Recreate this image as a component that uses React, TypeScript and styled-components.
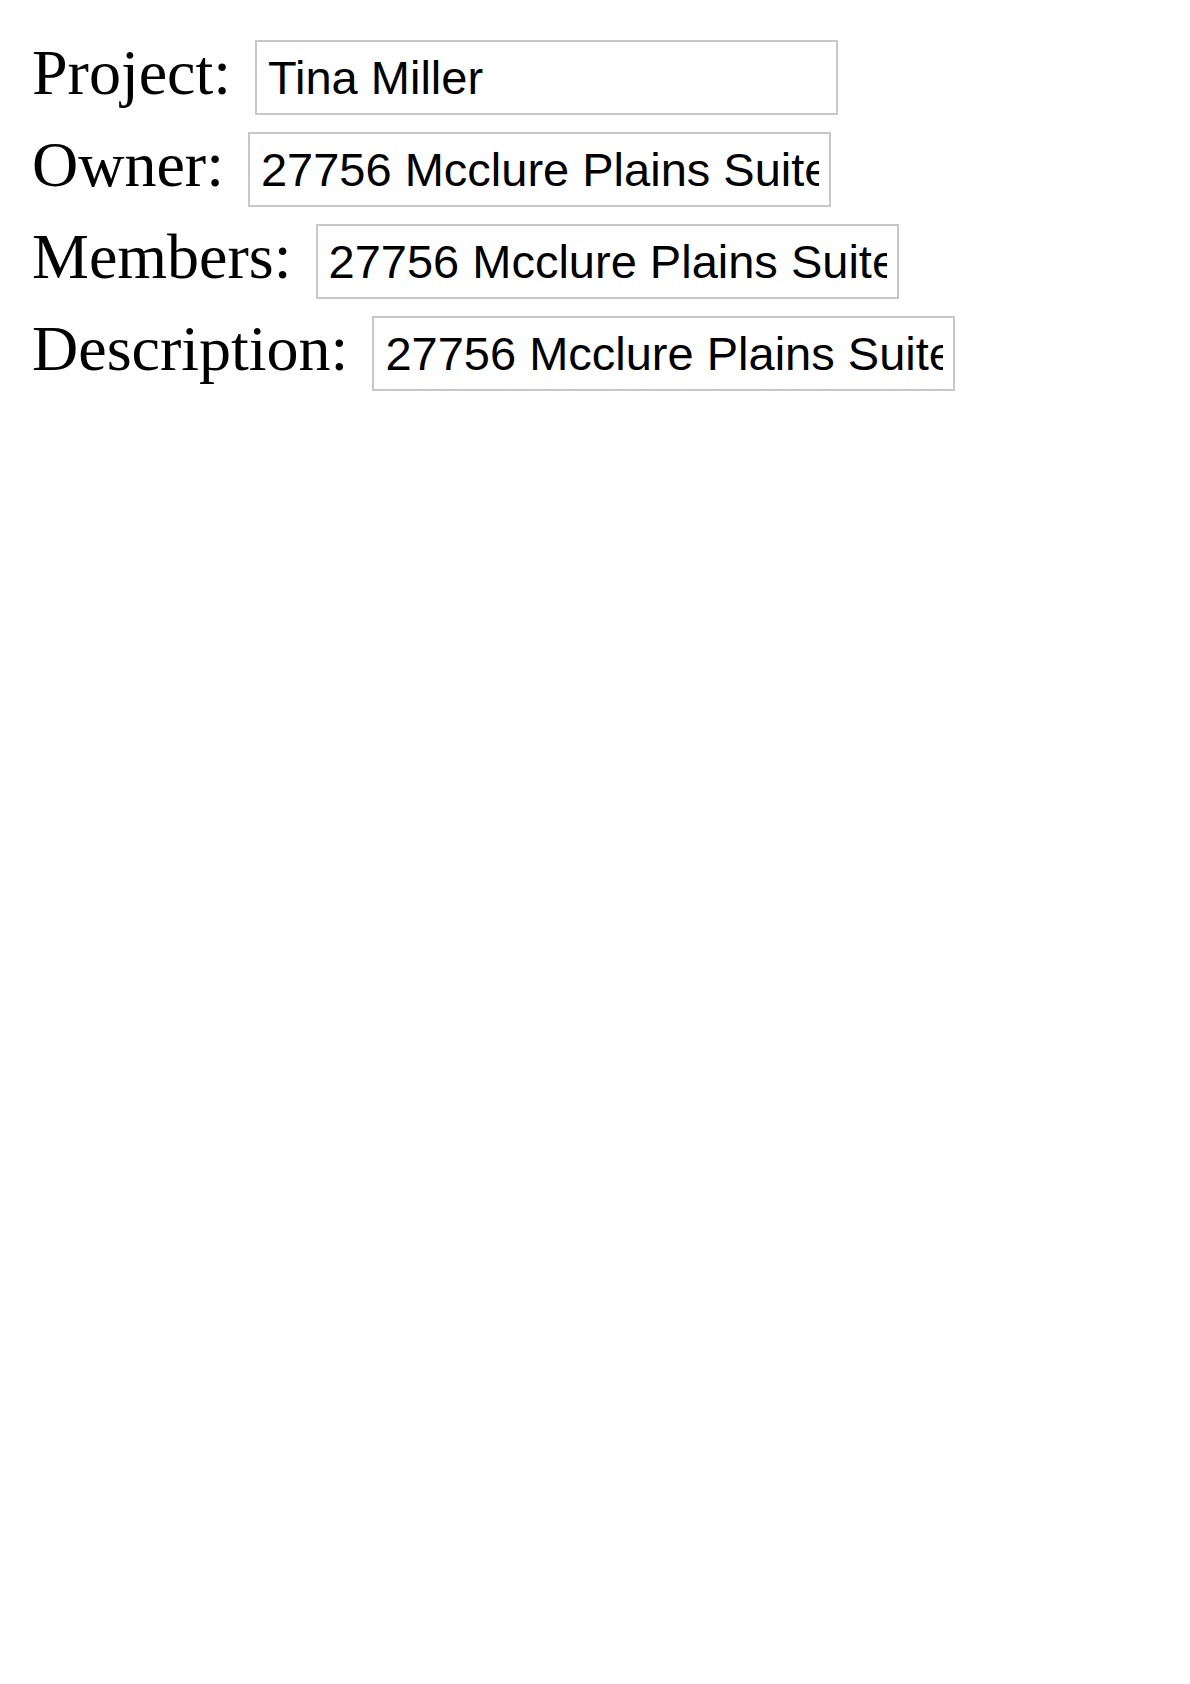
import styled, { createGlobalStyle } from "styled-components";

const GlobalStyle = createGlobalStyle`
  html, body {
    margin: 0;
    padding: 0;
    background: #fff;
  }
`;

const Form = styled.form`
  display: flex;
  flex-direction: column;
  gap: 17px;
  padding: 40px 0 0 32px;
`;

const Row = styled.div`
  display: flex;
  align-items: baseline;
  gap: 24px;
`;

const Label = styled.label`
  font-family: "Liberation Serif", "Times New Roman", serif;
  font-size: 64px;
  line-height: 1;
  color: #000;
  white-space: nowrap;
`;

const Field = styled.input`
  box-sizing: border-box;
  width: 583px;
  height: 75px;
  padding: 0 10px 0 11px;
  border: 2px solid #c8c8c8;
  border-radius: 0;
  outline: none;
  font-family: "Liberation Sans", Arial, sans-serif;
  font-size: 47px;
  color: #000;
  background: #fff;
`;

const fields = [
  { label: "Project:", value: "Tina Miller" },
  { label: "Owner:", value: "27756 Mcclure Plains Suite 522" },
  { label: "Members:", value: "27756 Mcclure Plains Suite 522" },
  { label: "Description:", value: "27756 Mcclure Plains Suite 522" },
];

export default function App() {
  return (
    <>
      <GlobalStyle />
      <Form>
        {fields.map((f) => (
          <Row key={f.label}>
            <Label>{f.label}</Label>
            <Field type="text" defaultValue={f.value} />
          </Row>
        ))}
      </Form>
    </>
  );
}
